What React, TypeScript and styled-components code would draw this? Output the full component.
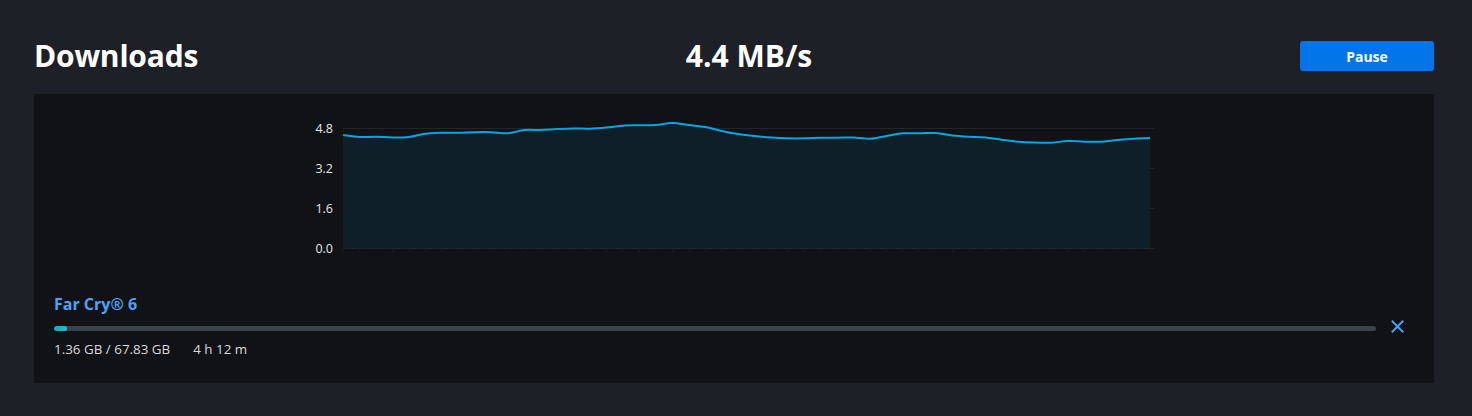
import styled, { createGlobalStyle } from "styled-components";

const GlobalStyle = createGlobalStyle`
  html, body {
    margin: 0;
    padding: 0;
    background: #1e2028;
  }
  body {
    font-family: "Open Sans", "Noto Sans", sans-serif;
    color: #ffffff;
  }
`;

const Page = styled.div`
  width: 1472px;
  height: 416px;
  box-sizing: border-box;
  padding: 36px 38px 0 34px;
  background: #1e2028;
`;

const Header = styled.header`
  display: flex;
  justify-content: space-between;
  align-items: center;
  height: 40px;
  margin-bottom: 18px;
`;

const Title = styled.h1`
  margin: 0;
  font-size: 30px;
  font-weight: 700;
  letter-spacing: -0.2px;
  line-height: 40px;
`;

const Speed = styled.div`
  font-size: 30px;
  font-weight: 700;
  letter-spacing: 0px;
  line-height: 40px;
`;

const PauseButton = styled.button`
  width: 134px;
  height: 30px;
  border: none;
  border-radius: 3px;
  background: #0074e8;
  color: #ffffff;
  font-family: inherit;
  font-size: 14px;
  font-weight: 700;
  cursor: pointer;
`;

const Panel = styled.section`
  height: 289px;
  box-sizing: border-box;
  background: #111216;
  padding: 10px 30px 0 20px;
  display: flex;
  flex-direction: column;
`;

const ChartSvg = styled.svg`
  display: block;
  align-self: center;
  margin-left: 10px;
  margin-bottom: 30px;
`;

const Item = styled.div`
  display: flex;
  flex-direction: column;
`;

const GameTitle = styled.div`
  font-size: 16px;
  font-weight: 700;
  line-height: 20px;
  color: #4da3f2;
`;

const ProgressRow = styled.div`
  display: flex;
  align-items: center;
  gap: 14px;
  margin-top: 7px;
`;

const Track = styled.div`
  flex: 1;
  height: 5px;
  border-radius: 3px;
  background: #3a424d;
  overflow: hidden;
`;

const Fill = styled.div`
  height: 100%;
  border-radius: 3px;
  background: linear-gradient(90deg, #1aa6c0, #22bcd4);
`;

const CancelButton = styled.button`
  width: 14px;
  height: 14px;
  padding: 0;
  border: none;
  background: transparent;
  display: flex;
  align-items: center;
  justify-content: center;
  cursor: pointer;
  position: relative;
  top: -2px;
`;

const Stats = styled.div`
  display: flex;
  gap: 23px;
  margin-top: 5px;
  font-size: 13.4px;
  line-height: 18px;
  color: #d9d9d9;
`;

const points = [
  31, 33, 32.7, 33.5, 33, 29.7, 28.7, 28.7, 28.2, 28.2, 29.3, 26, 26, 25, 24.5,
  24.7, 23.5, 21.7, 21.3, 21, 19, 21, 23, 27, 30, 32, 33.5, 34.3, 34.3, 33.8,
  33.7, 33.5, 34.7, 32, 29.3, 29.3, 29, 31.5, 32.7, 33.5, 35.8, 37.8, 38.6,
  38.7, 37, 37.7, 37.7, 36, 34.7, 34,
];

const X0 = 39;
const X1 = 846;
const BASE = 144;
const step = (X1 - X0) / (points.length - 1);

const smoothPath = (pts: [number, number][]) => {
  let d = `M${pts[0][0]},${pts[0][1]}`;
  for (let i = 0; i < pts.length - 1; i++) {
    const p0 = pts[i - 1] || pts[i];
    const p1 = pts[i];
    const p2 = pts[i + 1];
    const p3 = pts[i + 2] || p2;
    const c1x = p1[0] + (p2[0] - p0[0]) / 6;
    const c1y = p1[1] + (p2[1] - p0[1]) / 6;
    const c2x = p2[0] - (p3[0] - p1[0]) / 6;
    const c2y = p2[1] - (p3[1] - p1[1]) / 6;
    d += ` C${c1x.toFixed(1)},${c1y.toFixed(1)} ${c2x.toFixed(1)},${c2y.toFixed(1)} ${p2[0].toFixed(1)},${p2[1]}`;
  }
  return d;
};

const SpeedChart = () => {
  const pts = points.map((y, i) => [X0 + i * step, y] as [number, number]);
  const line = smoothPath(pts);
  const area = `${line} L${X1},${BASE} L${X0},${BASE} Z`;
  const grid = [
    { y: 24, label: "4.8" },
    { y: 64, label: "3.2" },
    { y: 104, label: "1.6" },
    { y: 144, label: "0.0" },
  ];
  return (
    <ChartSvg width={860} height={160} viewBox="0 0 860 160">
      {grid.map((g) => (
        <g key={g.label}>
          <line x1={X0} x2={850} y1={g.y + 0.5} y2={g.y + 0.5} stroke="#22252c" strokeWidth={1} />
          <text
            x={29}
            y={g.y}
            textAnchor="end"
            dominantBaseline="central"
            fill="#e6e6e6"
            fontSize={12.5}
            fontFamily='"Open Sans", "Noto Sans", sans-serif'
          >
            {g.label}
          </text>
        </g>
      ))}
      <path d={area} fill="#0e1f28" />
      <path d={line} fill="none" stroke="#00a6e6" strokeWidth={2} strokeLinejoin="round" />
      {pts.map(([x], i) => (
        <line key={i} x1={x} x2={x} y1={BASE} y2={BASE + 4} stroke="#1a1c22" strokeWidth={1} />
      ))}
    </ChartSvg>
  );
};

export default function App() {
  return (
    <>
      <GlobalStyle />
      <Page>
        <Header>
          <Title>Downloads</Title>
          <Speed>4.4 MB/s</Speed>
          <PauseButton>Pause</PauseButton>
        </Header>
        <Panel>
          <SpeedChart />
          <Item>
            <GameTitle>Far Cry® 6</GameTitle>
            <ProgressRow>
              <Track>
                <Fill style={{ width: `${Math.max(1, (1.36 / 67.83) * 50)}%` }} />
              </Track>
              <CancelButton aria-label="Cancel">
                <svg width="13" height="13" viewBox="0 0 13 13">
                  <path d="M1.5 1.5 L11.5 11.5 M11.5 1.5 L1.5 11.5" stroke="#4a9ff0" strokeWidth="2" strokeLinecap="square" />
                </svg>
              </CancelButton>
            </ProgressRow>
            <Stats>
              <span>1.36 GB / 67.83 GB</span>
              <span>4 h 12 m</span>
            </Stats>
          </Item>
        </Panel>
      </Page>
    </>
  );
}
